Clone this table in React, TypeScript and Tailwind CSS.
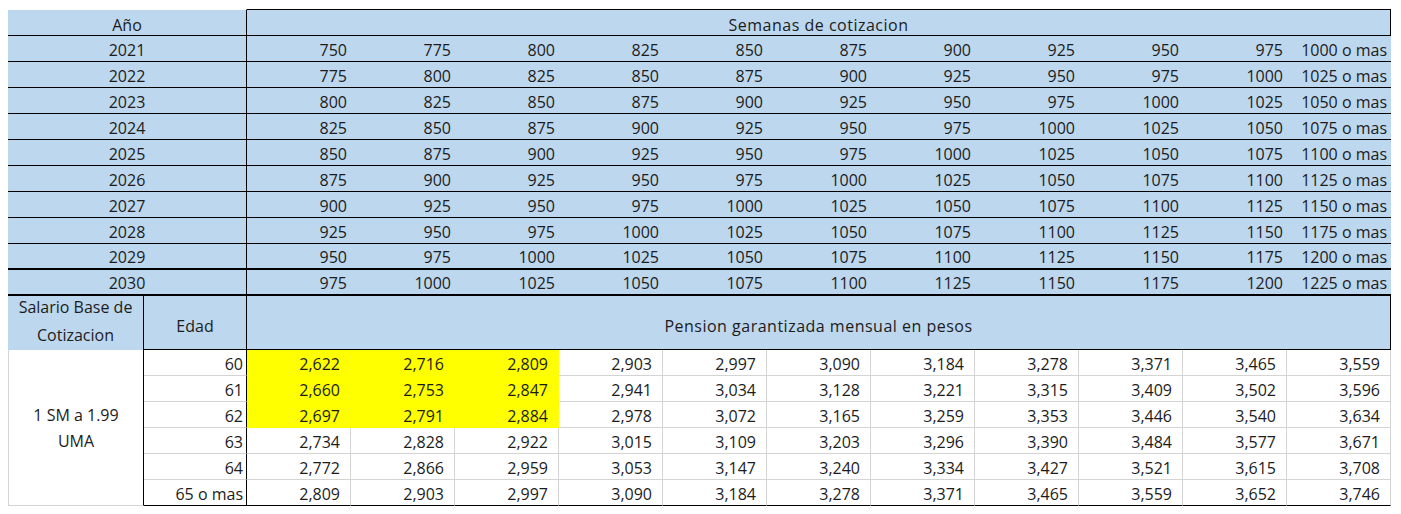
import React from "react";

const BLUE = "bg-[#bdd7ee]";

const years = [2021, 2022, 2023, 2024, 2025, 2026, 2027, 2028, 2029, 2030];

const pension: { edad: string; vals: string[] }[] = [
  { edad: "60", vals: ["2,622", "2,716", "2,809", "2,903", "2,997", "3,090", "3,184", "3,278", "3,371", "3,465", "3,559"] },
  { edad: "61", vals: ["2,660", "2,753", "2,847", "2,941", "3,034", "3,128", "3,221", "3,315", "3,409", "3,502", "3,596"] },
  { edad: "62", vals: ["2,697", "2,791", "2,884", "2,978", "3,072", "3,165", "3,259", "3,353", "3,446", "3,540", "3,634"] },
  { edad: "63", vals: ["2,734", "2,828", "2,922", "3,015", "3,109", "3,203", "3,296", "3,390", "3,484", "3,577", "3,671"] },
  { edad: "64", vals: ["2,772", "2,866", "2,959", "3,053", "3,147", "3,240", "3,334", "3,427", "3,521", "3,615", "3,708"] },
  { edad: "65 o mas", vals: ["2,809", "2,903", "2,997", "3,090", "3,184", "3,278", "3,371", "3,465", "3,559", "3,652", "3,746"] },
];

export default function App() {
  return (
    <div
      className="w-[1401px] h-[514px] bg-white pl-[8px] pt-[9px] text-[16px] text-[#1c1c1c] leading-none"
      style={{ fontFamily: "'Open Sans', Lato, sans-serif" }}
    >
      <div className="w-[1383px] flex flex-col">
        {/* Header row */}
        <div className="flex h-[27px]">
          <div className={`w-[239px] ${BLUE} border-t border-t-white border-r border-r-black border-b border-b-black flex items-end justify-center pb-[2px]`}>
            Año
          </div>
          <div className={`w-[1144px] ${BLUE} border border-l-0 border-black flex items-end justify-center pb-[2px] tracking-[0.5px]`}>
            Semanas de cotizacion
          </div>
        </div>

        {/* Year rows */}
        {years.map((y, i) => {
          const thick = y >= 2029;
          const vals: string[] = [];
          for (let j = 0; j < 10; j++) vals.push(String(750 + 25 * i + 25 * j));
          vals.push(`${1000 + 25 * i} o mas`);
          return (
            <div
              key={y}
              className={`flex h-[26px] ${BLUE} border-black ${thick ? "border-b-2" : "border-b"}`}
            >
              <div className="w-[239px] border-r border-black flex items-end justify-center pb-[3px]">
                {y}
              </div>
              {vals.map((v, j) => (
                <div key={j} className="w-[104px] flex items-end justify-end pr-[4px] pb-[3px]">
                  {v}
                </div>
              ))}
            </div>
          );
        })}

        {/* Second header */}
        <div className="flex h-[54px]">
          <div className={`w-[136px] ${BLUE} border-r border-black flex flex-col items-center justify-start gap-[6px] leading-[22px]`}>
            <span>Salario Base de</span>
            <span>Cotizacion</span>
          </div>
          <div className={`w-[103px] ${BLUE} border-r border-b border-black flex items-end justify-center pb-[15px]`}>
            Edad
          </div>
          <div className={`w-[1144px] ${BLUE} border-r border-b border-black flex items-end justify-center pb-[15px] tracking-[0.5px]`}>
            Pension garantizada mensual en pesos
          </div>
        </div>

        {/* Data */}
        <div className="flex">
          <div className="w-[136px] h-[156px] bg-white border-l border-b border-[#d4d4d4] border-r border-r-black flex flex-col items-center justify-center leading-[26px]">
            <span>1 SM a 1.99</span>
            <span>UMA</span>
          </div>
          <div className="flex flex-col">
            {pension.map((row, r) => {
              const last = r === pension.length - 1;
              return (
                <div key={row.edad} className="flex h-[26px]">
                  <div
                    className={`w-[103px] border-r border-r-black border-b ${last ? "border-b-black" : "border-b-[#d4d4d4]"} flex items-end justify-end pr-[3px] pb-[3px]`}
                  >
                    {row.edad}
                  </div>
                  {row.vals.map((v, c) => {
                    const yellow = r < 3 && c < 3;
                    const cls = yellow
                      ? "bg-[#ffff00] border-r border-r-[#ffff00] border-b border-b-[#ffff00]"
                      : `bg-white border-r border-r-[#d4d4d4] border-b ${last ? "border-b-black" : "border-b-[#d4d4d4]"}`;
                    return (
                      <div key={c} className={`w-[104px] ${cls} flex items-end justify-end pr-[10px] pb-[3px]`}>
                        {v}
                      </div>
                    );
                  })}
                </div>
              );
            })}
          </div>
        </div>
      </div>
    </div>
  );
}
